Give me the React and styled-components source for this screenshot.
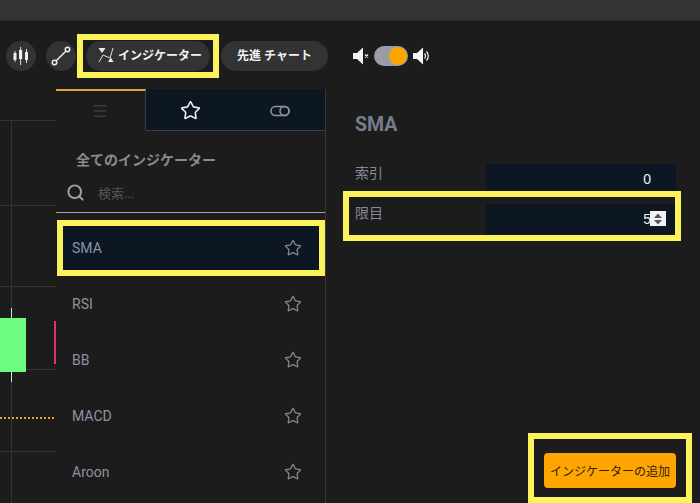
import React from "react";
import styled, { createGlobalStyle } from "styled-components";
import { Search, Star, Menu } from "lucide-react";

const GlobalStyle = createGlobalStyle`
  html, body {
    margin: 0;
    padding: 0;
    background: #1c1c1c;
  }
  * {
    box-sizing: border-box;
  }
`;

const Page = styled.div`
  width: 700px;
  height: 503px;
  overflow: hidden;
  display: flex;
  flex-direction: column;
  background: #1c1c1c;
  font-family: Roboto, "Noto Sans CJK JP", sans-serif;
`;

const TopBar = styled.div`
  height: 21px;
  flex: none;
  background: #333333;
  border-bottom: 1px solid #2a2a2a;
`;

const Toolbar = styled.div`
  height: 68px;
  flex: none;
  display: flex;
  align-items: center;
  padding: 2px 0 0 6px;
`;

const RoundButton = styled.div`
  width: 30px;
  height: 30px;
  flex: none;
  margin-right: ${(p) => p.$gap}px;
  border-radius: 50%;
  background: #333333;
  display: flex;
  align-items: center;
  justify-content: center;
`;

const PillButton = styled.div`
  position: relative;
  height: 30px;
  width: ${(p) => p.$width}px;
  flex: none;
  margin-right: ${(p) => p.$gap}px;
  padding: 0 0 3px ${(p) => p.$indent || 0}px;
  border-radius: 15px;
  background: #333333;
  color: #f2f2f2;
  font-size: 12px;
  font-weight: 700;
  white-space: pre;
  display: flex;
  align-items: center;
  justify-content: center;
  gap: 4px;
`;

// yellow marker drawn over whatever it is placed in
const Highlight = styled.div`
  position: absolute;
  inset: ${(p) => p.$inset};
  border: ${(p) => p.$border || 6}px solid #fcf25c;
  pointer-events: none;
`;

const SoundGroup = styled.div`
  display: flex;
  align-items: center;
  gap: 5px;
`;

const Toggle = styled.div`
  width: 34px;
  height: 20px;
  border-radius: 10px;
  background: #9a9ca6;
  display: flex;
  align-items: center;
  justify-content: flex-end;
  padding-right: 1px;
`;

const Knob = styled.div`
  width: 18px;
  height: 18px;
  border-radius: 50%;
  background: #ffa500;
`;

const Main = styled.div`
  flex: 1;
  min-height: 0;
  display: flex;
`;

const ChartArea = styled.div`
  width: 56px;
  flex: none;
`;

const ListPanel = styled.div`
  width: 270px;
  flex: none;
  display: flex;
  flex-direction: column;
  border-right: 1px solid #383838;
`;

const Tabs = styled.div`
  height: 42px;
  flex: none;
  display: flex;
`;

const Tab = styled.div`
  width: ${(p) => p.$width}px;
  padding-right: 2px;
  display: flex;
  align-items: center;
  justify-content: center;
  background: ${(p) => (p.$active ? "transparent" : "#0c1723")};
  border-top: 2px solid ${(p) => (p.$active ? "#e8a33d" : "transparent")};
  border-bottom: 1px solid ${(p) => (p.$active ? "transparent" : "#3a3f45")};
  border-right: ${(p) => (p.$active ? "1px solid #3a3f45" : "none")};
`;

const ListTitle = styled.div`
  margin: 19px 0 0 20px;
  height: 20px;
  font-size: 14px;
  line-height: 20px;
  font-weight: 700;
  color: #8b8b8b;
`;

const SearchRow = styled.div`
  height: 37px;
  flex: none;
  margin-top: 6px;
  padding: 0 0 4px 10px;
  display: flex;
  align-items: center;
  gap: 13px;
  border-bottom: 1px solid #a5a5a5;
`;

const SearchInput = styled.input`
  width: 150px;
  padding: 3px 0 0;
  border: none;
  outline: none;
  background: transparent;
  font-family: inherit;
  font-size: 13px;
  color: #ccc;
  &::placeholder {
    color: #555555;
    opacity: 1;
  }
`;

const IndicatorList = styled.div`
  margin-top: 11px;
  display: flex;
  flex-direction: column;
  gap: 8px;
`;

const IndicatorRow = styled.div`
  position: relative;
  height: 48px;
  flex: none;
  padding: 0 23px 0 16px;
  display: flex;
  align-items: center;
  justify-content: space-between;
  background: ${(p) => (p.$selected ? "#0c1723" : "transparent")};
  color: #8b93a3;
  font-size: 14px;
`;

const SettingsPanel = styled.div`
  flex: 1;
  padding: 25px 24px 15px 29px;
  display: flex;
  flex-direction: column;
`;

const SettingsTitle = styled.div`
  height: 22px;
  font-size: 19.5px;
  line-height: 22px;
  font-weight: 700;
  color: #767c8e;
  margin-bottom: 28px;
`;

const FieldRow = styled.div`
  position: relative;
  height: 31px;
  margin-bottom: 9px;
  display: flex;
  align-items: flex-start;
  color: #858b99;
  font-size: 14px;
`;

const FieldLabel = styled.div`
  width: 131px;
  flex: none;
  line-height: 18px;
`;

const FieldInput = styled.input`
  width: 190px;
  height: 31px;
  padding: 0 25px 2px 0;
  border: none;
  outline: none;
  background: #0c1723;
  color: #f0f0f0;
  font-family: "Liberation Sans", sans-serif;
  font-size: 14px;
  text-align: right;
`;

// the number input's stepper, shown because the field is hovered in the picture
const Stepper = styled.div`
  position: absolute;
  right: 10px;
  top: 7px;
  width: 16px;
  height: 15px;
  background: #f1f3f6;
  display: flex;
  align-items: center;
  justify-content: center;
`;

const Footer = styled.div`
  margin-top: auto;
  display: flex;
  justify-content: flex-end;
`;

const AddButton = styled.button`
  position: relative;
  width: 132px;
  height: 35px;
  padding: 0;
  border: none;
  border-radius: 4px;
  background: #ffa500;
  color: #2a2212;
  font-family: inherit;
  font-size: 12px;
`;

const CandleIcon = () => (
  <svg width="16" height="18" viewBox="0 0 16 18" fill="#eee">
    <rect x="0.5" y="6" width="3" height="7" />
    <rect x="1.6" y="4" width="0.9" height="11" />
    <rect x="6" y="3" width="3.2" height="9" />
    <rect x="7.2" y="0" width="0.9" height="18" />
    <rect x="12" y="5" width="3" height="8" />
    <rect x="13.1" y="2" width="0.9" height="14" />
  </svg>
);

const LineToolIcon = () => (
  <svg width="20" height="20" viewBox="0 0 20 20" fill="none" stroke="#eee" strokeWidth="1.5">
    <circle cx="3.5" cy="16.5" r="2.2" />
    <circle cx="16.5" cy="3.5" r="2.2" />
    <path d="M5.2 14.8 14.8 5.2" />
  </svg>
);

const IndicatorIcon = () => (
  <svg width="16" height="16" viewBox="0 0 16 16" fill="none">
    <path d="M0.5 1h7l-3.5 5z" fill="#eee" />
    <path d="M10 15h5.5l-2.7-4.5z" fill="#eee" />
    <path d="M1 15 5 8l7 3 3-10" stroke="#ddd" strokeWidth="1" />
  </svg>
);

const MuteIcon = () => (
  <svg width="16" height="18" viewBox="0 0 16 18" fill="#f4f4f4">
    <path d="M0 6h4l6-5.5v17L4 12H0z" />
    <path d="M12 7.5l3 3M15 7.5l-3 3" stroke="#f4f4f4" strokeWidth="1.1" />
  </svg>
);

const SpeakerIcon = () => (
  <svg width="17" height="18" viewBox="0 0 17 18" fill="#f4f4f4">
    <path d="M0 6h4l6-5.5v17L4 12H0z" />
    <path d="M11.5 6.5a3.5 3.5 0 0 1 0 5M13.5 4.5a6.5 6.5 0 0 1 0 9" fill="none" stroke="#f4f4f4" strokeWidth="1.2" />
  </svg>
);

const PillIcon = () => (
  <svg width="20" height="12" viewBox="0 0 20 12" fill="none" stroke="#8d949c" strokeWidth="1.6">
    <rect x="1" y="1.5" width="18" height="9" rx="4.5" />
    <circle cx="14.5" cy="6" r="4.5" />
  </svg>
);

const ChartBackground = () => (
  <svg width="56" height="414" viewBox="0 89 56 414">
    <g stroke="#333" strokeWidth="1">
      <path d="M0 120.5H56M0 205.5H56M0 286.5H56M0 369.5H56M0 451.5H56M11.5 120V503" />
    </g>
    <rect x="11" y="308" width="1" height="74" fill="#a8ffc0" />
    <rect x="0" y="318" width="26" height="54" fill="#6dfc7f" />
    <rect x="54" y="321" width="2" height="43" fill="#e8305f" />
    <path d="M0 418H56" stroke="#e8a33d" strokeWidth="2" strokeDasharray="2 2" />
  </svg>
);

const indicators = ["SMA", "RSI", "BB", "MACD", "Aroon"];

export default function App() {
  return (
    <Page>
      <GlobalStyle />
      <TopBar />
      <Toolbar>
        <RoundButton $gap={10}>
          <CandleIcon />
        </RoundButton>
        <RoundButton $gap={10}>
          <LineToolIcon />
        </RoundButton>
        <PillButton $width={124} $gap={11} $indent={4}>
          <IndicatorIcon />
          インジケーター
          <Highlight $inset="-7px -9px -7px -9px" />
        </PillButton>
        <PillButton $width={107} $gap={25}>
          先進 チャート
        </PillButton>
        <SoundGroup>
          <MuteIcon />
          <Toggle>
            <Knob />
          </Toggle>
          <SpeakerIcon />
        </SoundGroup>
      </Toolbar>
      <Main>
        <ChartArea>
          <ChartBackground />
        </ChartArea>
        <ListPanel>
          <Tabs>
            <Tab $active $width={90}>
              <Menu size={18} color="#4a4a4a" strokeWidth={1.6} />
            </Tab>
            <Tab $width={90}>
              <Star size={21} color="#f2f2f2" strokeWidth={1.8} />
            </Tab>
            <Tab $width={89}>
              <PillIcon />
            </Tab>
          </Tabs>
          <ListTitle>全てのインジケーター</ListTitle>
          <SearchRow>
            <Search size={19} color="#a0a0a0" strokeWidth={2.5} />
            <SearchInput placeholder="検索..." readOnly />
          </SearchRow>
          <IndicatorList>
            {indicators.map((name) => (
              <IndicatorRow key={name} $selected={name === "SMA"}>
                {name}
                <Star size={18} color="#858a90" strokeWidth={1.7} />
                {name === "SMA" && <Highlight $inset="-4px 0 -4px 1px" />}
              </IndicatorRow>
            ))}
          </IndicatorList>
        </ListPanel>
        <SettingsPanel>
          <SettingsTitle>SMA</SettingsTitle>
          <FieldRow>
            <FieldLabel>索引</FieldLabel>
            <FieldInput value="0" readOnly />
          </FieldRow>
          <FieldRow>
            <FieldLabel>限目</FieldLabel>
            <FieldInput value="5" readOnly />
            <Stepper>
              <svg width="10" height="12" viewBox="0 0 10 12" fill="#555">
                <path d="M5 0.5 9 5H1z" />
                <path d="M5 11.5 9 7H1z" />
              </svg>
            </Stepper>
            <Highlight $inset="-13px -5px -6px -12px" />
          </FieldRow>
          <Footer>
            <AddButton>
              インジケーターの追加
              <Highlight $inset="-20px -16px -15px -16px" />
            </AddButton>
          </Footer>
        </SettingsPanel>
      </Main>
    </Page>
  );
}
